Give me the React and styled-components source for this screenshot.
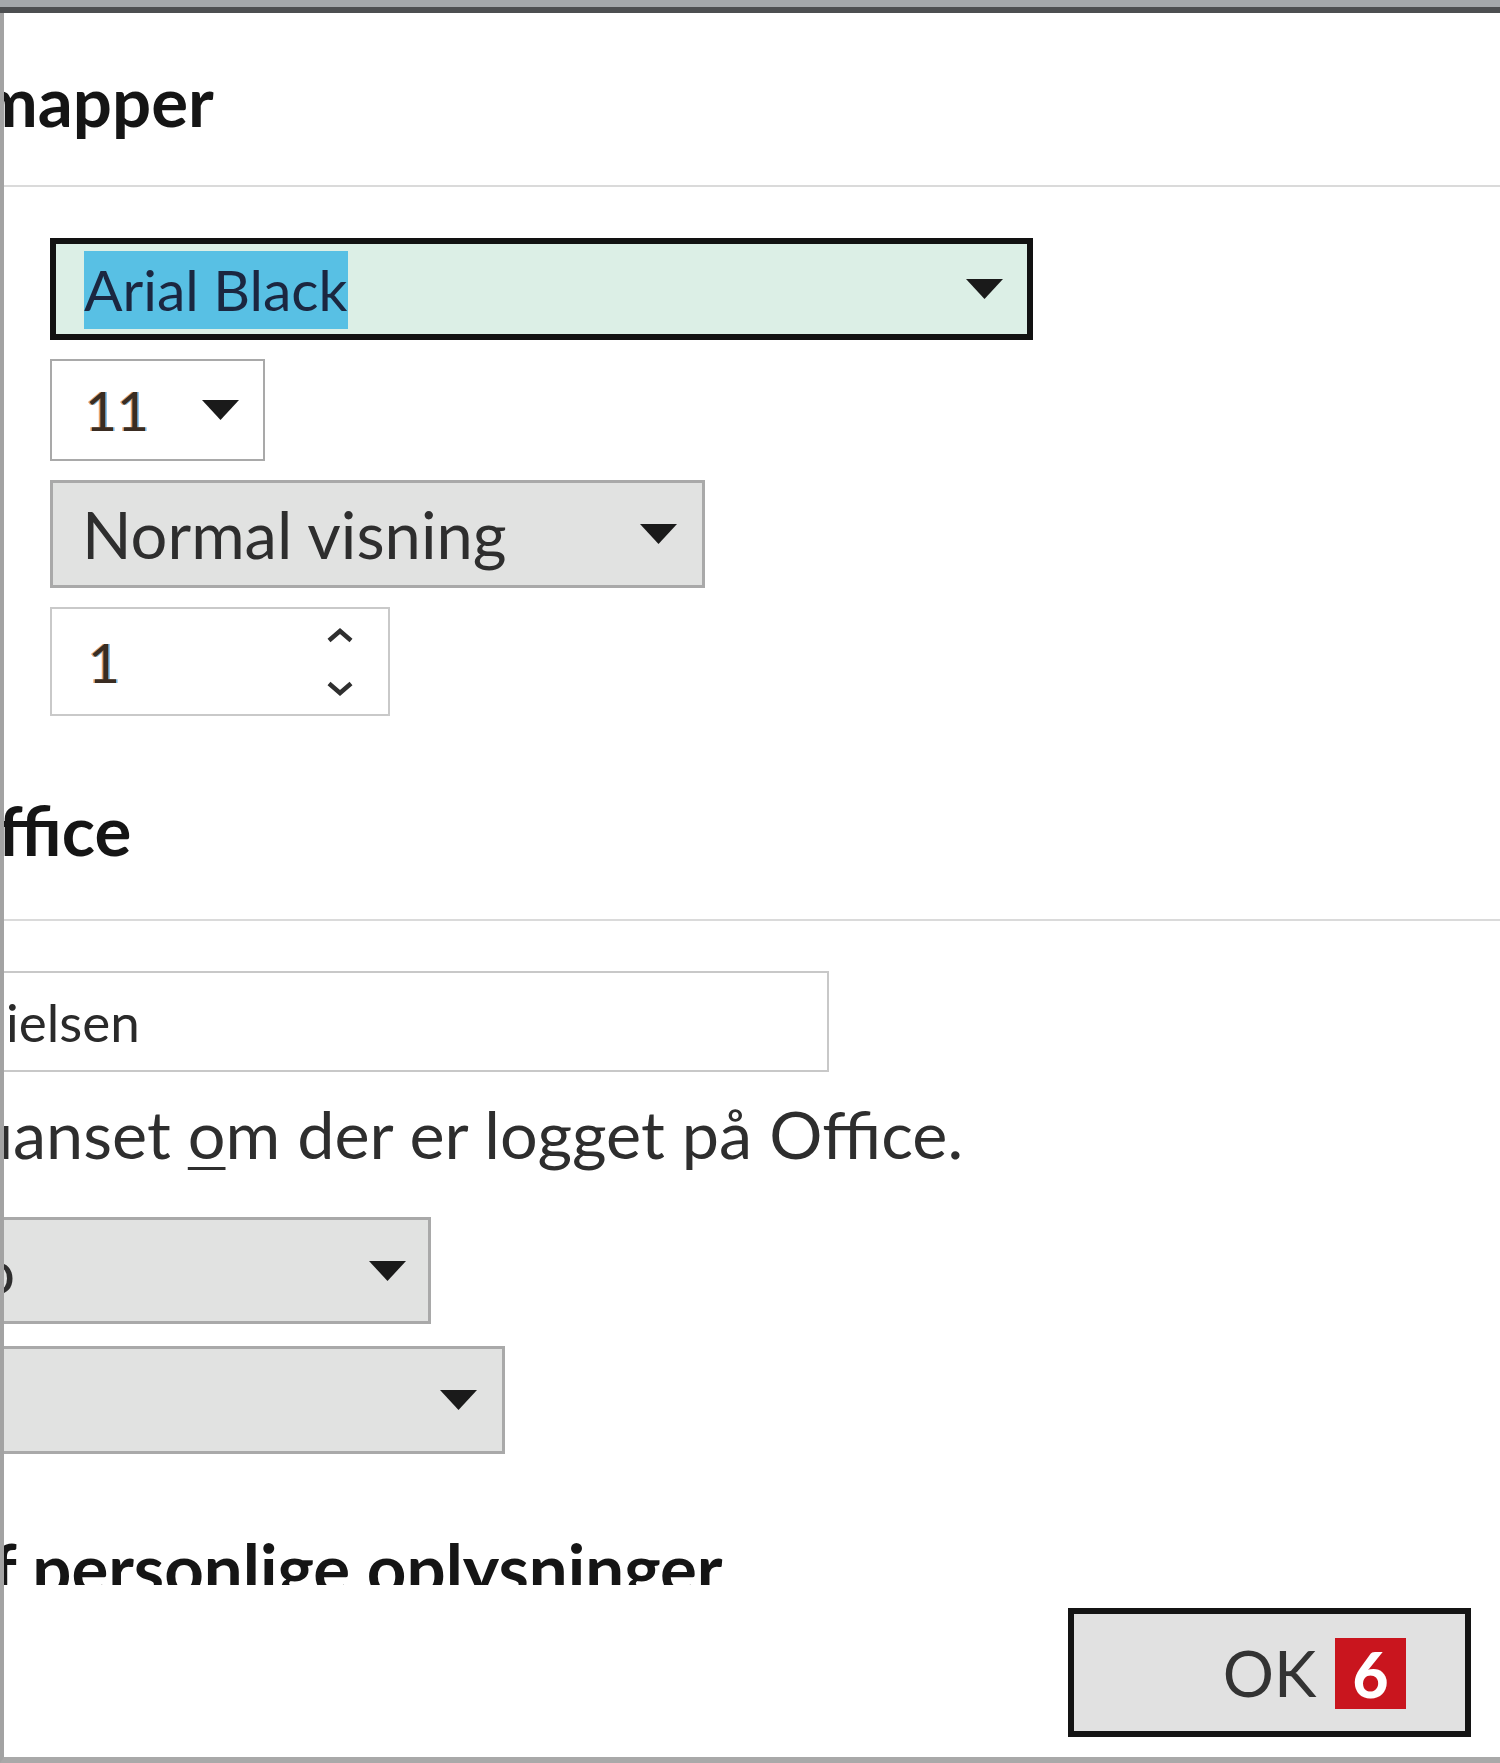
import React from "react";
import styled, { createGlobalStyle } from "styled-components";

const GlobalStyle = createGlobalStyle`
  html, body {
    margin: 0;
    padding: 0;
    background: #ffffff;
  }
  body {
    font-family: Lato, "Noto Sans", sans-serif;
    color: #2b2b2b;
  }
`;

const Window = styled.div`
  width: 1500px;
  height: 1763px;
  display: flex;
  flex-direction: column;
  overflow: hidden;
  background: #ffffff;
`;

const TitleEdge = styled.div`
  flex: none;
  height: 13px;
  background: linear-gradient(
    to bottom,
    #a4a8ab 0,
    #a4a8ab 7px,
    #4d4f51 7px,
    #4d4f51 13px
  );
`;

const Frame = styled.div`
  flex: 1;
  min-height: 0;
  display: flex;
  flex-direction: column;
  border-left: 4px solid #a3a3a3;
  border-bottom: 6px solid #a9a9a9;
`;

const Scroller = styled.div`
  flex: none;
  height: 1572px;
  overflow: hidden;
  display: flex;
  flex-direction: column;
  align-items: flex-start;
`;

const SectionTitle = styled.div`
  flex: none;
  margin: ${(p) => p.top}px 0 ${(p) => p.bottom ?? 54}px ${(p) => p.shift ?? -6}px;
  font-size: 69px;
  line-height: 70px;
  font-weight: 700;
  color: #151515;
  white-space: nowrap;
`;

const Divider = styled.div`
  flex: none;
  align-self: stretch;
  height: 2px;
  background: #dadada;
`;

const FieldStack = styled.div`
  display: flex;
  flex-direction: column;
  align-items: flex-start;
  gap: 19px;
  margin-top: 51px;
  padding-left: 46px;
`;

const Combo = styled.div`
  box-sizing: border-box;
  display: flex;
  align-items: center;
  width: ${(p) => p.w}px;
  height: ${(p) => p.h}px;
  padding: 0 ${(p) => p.padR ?? 24}px 0 ${(p) => p.padL ?? 28}px;
  border: ${(p) => p.bw}px solid ${(p) => p.bc};
  background: ${(p) => p.bg};
  font-size: ${(p) => p.fs ?? 60}px;
  color: #2e2e2e;
  white-space: nowrap;
  overflow: hidden;
`;

const Value = styled.span`
  flex: 1;
  min-width: 0;
`;

const Selected = styled.span`
  background: #58c0e4;
  color: #1b2740;
  padding: 4px 0 6px;
`;

const Digits = styled.span`
  flex: 1;
  color: #3a2c22;
  text-shadow: -1.5px 0 rgba(226, 134, 52, 0.75), 1.5px 0 rgba(52, 146, 214, 0.7);
`;

const Arrow = () => (
  <svg width="37" height="20" viewBox="0 0 37 20">
    <polygon points="0,0 37,0 18.5,20" fill="#1a1a1a" />
  </svg>
);

const SpinButtons = styled.div`
  display: flex;
  flex-direction: column;
  align-items: center;
  gap: 38px;
  margin-right: 10px;
`;

const Chevron = ({ up }) => (
  <svg width="28" height="15" viewBox="0 0 28 15">
    <polyline
      points={up ? "3,12.5 14,3 25,12.5" : "3,2.5 14,12 25,2.5"}
      fill="none"
      stroke="#2f2f2f"
      strokeWidth="4.5"
    />
  </svg>
);

const LowerStack = styled.div`
  display: flex;
  flex-direction: column;
  align-items: flex-start;
  margin: 50px 0 0 -60px;
`;

const TextBox = styled.div`
  box-sizing: border-box;
  width: 885px;
  height: 101px;
  display: flex;
  align-items: center;
  padding-left: 60px;
  border: 2.5px solid #c8c8c8;
  background: #ffffff;
  font-size: 53px;
  color: #2a2a2a;
`;

const Note = styled.p`
  margin: 29px 0 0;
  padding-left: 32px;
  font-size: 66.5px;
  line-height: 65px;
  color: #2e2e2e;
  white-space: nowrap;
`;

const AccessKey = styled.span`
  text-decoration: underline;
  text-decoration-thickness: 3px;
  text-underline-offset: 8px;
`;

const Footer = styled.div`
  flex: 1;
  display: flex;
  justify-content: flex-end;
  align-items: flex-start;
  padding: 23px 29px 0 0;
`;

const OkButton = styled.div`
  position: relative;
  box-sizing: border-box;
  width: 403px;
  height: 129px;
  display: flex;
  align-items: center;
  justify-content: center;
  border: 6px solid #141414;
  background: #e1e1e1;
  font-size: 64px;
  color: #333333;
`;

const Badge = styled.span`
  position: absolute;
  left: 261px;
  top: 24px;
  width: 71px;
  height: 71px;
  display: flex;
  align-items: center;
  justify-content: center;
  background: #c9151e;
  color: #ffffff;
  font-size: 62px;
  font-weight: 900;
`;

export default function App() {
  return (
    <>
      <GlobalStyle />
      <Window>
        <TitleEdge />
        <Frame>
          <Scroller>
            <SectionTitle top={53} bottom={49} shift={-24}>
              mapper
            </SectionTitle>
            <Divider />
            <FieldStack>
              <Combo w={983} h={102} bw={6} bc="#121212" bg="#dcefe6" padL={28} fs={57}>
                <Value>
                  <Selected>Arial Black</Selected>
                </Value>
                <Arrow />
              </Combo>
              <Combo w={215} h={102} bw={2.5} bc="#a9a9a9" bg="#ffffff" padL={33} padR={24} fs={55}>
                <Digits>11</Digits>
                <Arrow />
              </Combo>
              <Combo w={655} h={108} bw={3} bc="#a9a9a9" bg="#e1e2e1" padL={29} padR={25} fs={65}>
                <Value>Normal visning</Value>
                <Arrow />
              </Combo>
              <Combo w={340} h={109} bw={2.5} bc="#c9c9c9" bg="#ffffff" padL={36} padR={24} fs={55}>
                <Digits>1</Digits>
                <SpinButtons>
                  <Chevron up />
                  <Chevron />
                </SpinButtons>
              </Combo>
            </FieldStack>
            <SectionTitle top={79}>ffice</SectionTitle>
            <Divider />
            <LowerStack>
              <TextBox>ielsen</TextBox>
              <Note>
                uanset <AccessKey>o</AccessKey>m der er logget på Office.
              </Note>
              <Combo
                w={487}
                h={107}
                bw={3}
                bc="#a9a9a9"
                bg="#e1e2e1"
                padL={34}
                padR={22}
                style={{ marginTop: 51 }}
              >
                <Value>o</Value>
                <Arrow />
              </Combo>
              <Combo
                w={561}
                h={108}
                bw={3}
                bc="#a9a9a9"
                bg="#e1e2e1"
                padR={25}
                style={{ marginTop: 22 }}
              >
                <Value />
                <Arrow />
              </Combo>
            </LowerStack>
            <SectionTitle top={79} shift={-12}>
              f personlige oplysninger
            </SectionTitle>
          </Scroller>
          <Footer>
            <OkButton>
              OK
              <Badge>6</Badge>
            </OkButton>
          </Footer>
        </Frame>
      </Window>
    </>
  );
}
